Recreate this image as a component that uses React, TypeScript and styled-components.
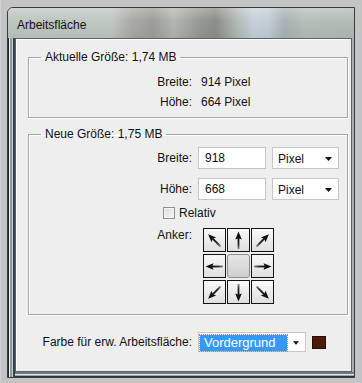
import styled, { createGlobalStyle } from 'styled-components';

const GlobalStyle = createGlobalStyle`
  html, body {
    margin: 0;
    padding: 0;
  }
  body {
    background: #c5c5c5;
    font-family: "Liberation Sans", Arial, sans-serif;
    font-size: 12px;
    color: #111111;
  }
`;

const Page = styled.div`
  width: 362px;
  height: 383px;
  box-sizing: border-box;
  padding: 7px 0 0 7px;
  background: linear-gradient(to right, #d0d0d0 0 1px, #c4c4c4 1px);
  overflow: hidden;
`;

const Window = styled.div`
  display: flex;
  flex-direction: column;
  width: 348px;
  height: 371px;
  box-sizing: border-box;
  border: 1px solid #3b3a33;
  border-top-left-radius: 6px;
  overflow: hidden;
`;

const TitleBar = styled.div`
  display: flex;
  align-items: center;
  height: 30px;
  box-sizing: border-box;
  flex-shrink: 0;
  padding: 4px 0 0 9px;
  background:
    linear-gradient(to bottom, rgba(255, 255, 255, 0.25), rgba(0, 0, 0, 0) 40%, rgba(0, 0, 0, 0.06)),
    linear-gradient(
      to right,
      #bfc7c2 0%,
      #c0c8c3 30%,
      #a9aba5 36%,
      #9e9f99 42%,
      #b4b8b2 48%,
      #999b95 55%,
      #8d8f89 60%,
      #b3bab5 66%,
      #c6d2dc 71%,
      #c3cfd8 75%,
      #aab4b5 80%,
      #b5c0bb 86%,
      #b2bdb8 100%
    );
  color: #111111;
  font-size: 12px;
`;

const Frame = styled.div`
  display: flex;
  flex: 1;
  padding: 0 2px 5px 7px;
  background:
    linear-gradient(to right, #25282b 0 1px, #eef3f6 1px 2px, #8d99a2 2px 4px, #c4ced4 4px 5px, #3a3f44 5px 7px, transparent 7px),
    linear-gradient(to top, #2f3235 0 1px, #9aa7ae 1px 2px, #dfe8ee 2px 3px, #6d7880 3px 5px, transparent 5px),
    #a4b0b6;
`;

const Client = styled.div`
  flex: 1;
  display: flex;
  flex-direction: column;
  box-sizing: border-box;
  padding: 11px 3px 0 12px;
  border: 1px solid #5d6266;
  box-shadow: inset 1px 1px 0 #ffffff;
  background: #eeeeee;
`;

const Group = styled.fieldset<{ $gap?: number; $top: number; $bottom: number }>`
  margin: ${({ $gap }) => $gap ?? 0}px 0 0;
  padding: ${({ $top }) => $top}px 0 ${({ $bottom }) => $bottom}px;
  min-width: 0;
  border: 1px solid #a6a6a6;
  box-shadow: 1px 1px 0 #ffffff, inset 1px 1px 0 #ffffff;
`;

const Legend = styled.legend`
  margin-left: 12px;
  padding: 0 4px;
  line-height: 14px;
  color: #111111;
`;

const Row = styled.div<{ $height: number; $space?: number }>`
  display: grid;
  grid-template-columns: 164px 1fr;
  column-gap: 5px;
  align-items: center;
  height: ${({ $height }) => $height}px;
  margin-top: ${({ $space }) => $space ?? 0}px;
`;

const Label = styled.span`
  padding-right: 1px;
  text-align: right;
  white-space: nowrap;
`;

const Value = styled.span`
  padding-left: 3px;
`;

const Controls = styled.div`
  display: flex;
  gap: 6px;
`;

const TextBox = styled.div`
  display: flex;
  align-items: center;
  width: 68px;
  height: 22px;
  box-sizing: border-box;
  padding-left: 6px;
  border: 1px solid #c6c6c6;
  background: #ffffff;
`;

const Select = styled.div<{ $width: number; $height: number }>`
  display: flex;
  align-items: center;
  width: ${({ $width }) => $width}px;
  height: ${({ $height }) => $height}px;
  box-sizing: border-box;
  padding: 1px 6px 0 5px;
  border: 1px solid #c8c8c8;
  background: #ffffff;
`;

const SelectText = styled.span`
  flex: 1;
`;

const Highlight = styled.span`
  flex: 0 0 87px;
  height: 16px;
  margin: 0 6px 0 -4px;
  box-sizing: border-box;
  padding-left: 4px;
  line-height: 16px;
  background: #3399ff;
  outline: 1px dotted #d8812c;
  color: #ffffff;
  font-size: 13px;
`;

const DropArrow = () => (
  <svg width="7" height="4" viewBox="0 0 7 4">
    <polygon points="0,0 7,0 3.5,4" fill="#111" />
  </svg>
);

const CheckRow = styled.label`
  display: flex;
  align-items: center;
  gap: 4px;
  height: 16px;
  margin-top: 5px;
  padding-left: 134px;
`;

const CheckBox = styled.span`
  width: 12px;
  height: 12px;
  box-sizing: border-box;
  border: 1px solid #8e8f8f;
  background: linear-gradient(135deg, #dcdcdc, #f6f6f6);
  box-shadow: inset 0 0 0 1px #f4f4f4;
`;

const AnchorRow = styled.div`
  display: grid;
  grid-template-columns: 164px 1fr;
  column-gap: 5px;
  align-items: start;
  margin-top: 7px;
`;

const AnchorGrid = styled.div`
  display: grid;
  grid-template-columns: repeat(3, 23px);
  grid-template-rows: repeat(3, 24px);
  gap: 2px 1px;
  margin-left: 5px;
`;

const Cell = styled.div<{ $center?: boolean }>`
  display: grid;
  place-items: center;
  box-sizing: border-box;
  border: 1px solid ${({ $center }) => ($center ? '#8d8d8d' : '#141414')};
  border-radius: ${({ $center }) => ($center ? 3 : 0)}px;
  background: ${({ $center }) =>
    $center ? 'linear-gradient(#e6e6e6, #cfcfcf)' : 'linear-gradient(#f9f9f9, #dfdfdf)'};
`;

const BottomRow = styled.div`
  display: grid;
  grid-template-columns: 165px auto auto 1fr;
  column-gap: 5px;
  align-items: center;
  margin-top: 17px;
`;

const Swatch = styled.span`
  width: 14px;
  height: 13px;
  margin-left: 1px;
  box-sizing: border-box;
  border: 1px solid #2a0d03;
  background: #4b1a08;
`;

const Arrow = ({ angle, id }: { angle: number; id: string }) => (
  <svg width="21" height="21" viewBox="0 0 21 21">
    <defs>
      <linearGradient id={id} x1="0" y1="0" x2="0" y2="1">
        <stop offset="0" stopColor="#0c0c0c" />
        <stop offset="0.6" stopColor="#2a2a2a" />
        <stop offset="1" stopColor="#8a8a8a" />
      </linearGradient>
    </defs>
    <g transform={`rotate(${angle} 10.5 10.5)`}>
      <rect x="9.6" y="8" width="1.8" height="11" fill={`url(#${id})`} />
      <polygon points="7.2,9.5 10.5,1.5 13.8,9.5 10.5,8.2" fill="#111" />
    </g>
  </svg>
);

const anchors: (number | null)[] = [-45, 0, 45, -90, null, 90, -135, 180, 135];

export default function App() {
  return (
    <>
      <GlobalStyle />
      <Page>
        <Window>
          <TitleBar>Arbeitsfläche</TitleBar>
          <Frame>
            <Client>
              <Group $top={8} $bottom={5}>
                <Legend>Aktuelle Größe: 1,74 MB</Legend>
                <Row $height={20}>
                  <Label>Breite:</Label>
                  <Value>914 Pixel</Value>
                </Row>
                <Row $height={20}>
                  <Label>Höhe:</Label>
                  <Value>664 Pixel</Value>
                </Row>
              </Group>

              <Group $gap={9} $top={6} $bottom={10}>
                <Legend>Neue Größe: 1,75 MB</Legend>
                <Row $height={22}>
                  <Label>Breite:</Label>
                  <Controls>
                    <TextBox>918</TextBox>
                    <Select $width={67} $height={22}>
                      <SelectText>Pixel</SelectText>
                      <DropArrow />
                    </Select>
                  </Controls>
                </Row>
                <Row $height={22} $space={9}>
                  <Label>Höhe:</Label>
                  <Controls>
                    <TextBox>668</TextBox>
                    <Select $width={67} $height={22}>
                      <SelectText>Pixel</SelectText>
                      <DropArrow />
                    </Select>
                  </Controls>
                </Row>
                <CheckRow>
                  <CheckBox />
                  Relativ
                </CheckRow>
                <AnchorRow>
                  <Label>Anker:</Label>
                  <AnchorGrid>
                    {anchors.map((a, i) =>
                      a === null ? (
                        <Cell key={i} $center />
                      ) : (
                        <Cell key={i}>
                          <Arrow angle={a} id={`ag${i}`} />
                        </Cell>
                      ),
                    )}
                  </AnchorGrid>
                </AnchorRow>
              </Group>

              <BottomRow>
                <Label>Farbe für erw. Arbeitsfläche:</Label>
                <Select $width={108} $height={20}>
                  <Highlight>Vordergrund</Highlight>
                  <DropArrow />
                </Select>
                <Swatch />
              </BottomRow>
            </Client>
          </Frame>
        </Window>
      </Page>
    </>
  );
}
